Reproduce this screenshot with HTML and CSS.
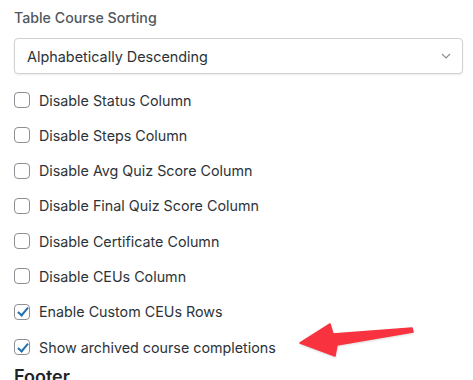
FILE: index.html
```html
<!DOCTYPE html>
<html lang="en">

<head>
    <meta charset="UTF-8">
    <title>Course Table Settings</title>
    <link rel="stylesheet" href="styles.css">
</head>

<body>
    <div class="panel">
        <label class="field-label" for="sorting">Table Course Sorting</label>
        <div class="select-wrap">
            <select id="sorting" class="select">
                <option>Alphabetically Descending</option>
                <option>Alphabetically Ascending</option>
            </select>
            <svg class="chevron" width="10" height="6" viewBox="0 0 10 6">
                <path d="M1 1 L5 5 L9 1" fill="none" stroke="#8c8f94" stroke-width="1.2" />
            </svg>
        </div>

        <div class="options">
            <label class="option"><input type="checkbox"> Disable Status Column</label>
            <label class="option"><input type="checkbox"> Disable Steps Column</label>
            <label class="option"><input type="checkbox"> Disable Avg Quiz Score Column</label>
            <label class="option"><input type="checkbox"> Disable Final Quiz Score Column</label>
            <label class="option"><input type="checkbox"> Disable Certificate Column</label>
            <label class="option"><input type="checkbox"> Disable CEUs Column</label>
            <label class="option"><input type="checkbox" checked> Enable Custom CEUs Rows</label>
            <label class="option"><input type="checkbox" checked> Show archived course completions</label>
        </div>

        <h3 class="section-title">Footer</h3>
    </div>

    <!-- annotation arrow -->
    <svg class="arrow" width="473" height="380" viewBox="0 0 473 380">
        <polygon points="300,343 330,324 333,334 412,328 413,332 337,345 335,356"
            fill="#f8333f" stroke="#f8333f" stroke-width="1.5" stroke-linejoin="round" />
    </svg>
</body>

</html>
```

FILE: styles.css
```css
body {
    font-family: 'Inter', 'Liberation Sans', sans-serif;
    margin: 0;
    padding: 0;
    background: #fff;
    color: #2c3338;
    overflow: hidden;
}

.panel {
    padding: 9px 10px 0 14px;
}

.field-label {
    display: block;
    font-size: 14.2px;
    font-weight: 500;
    color: #50575e;
    line-height: 18px;
    margin-bottom: 11px;
}

.select-wrap {
    position: relative;
    width: 449px;
}

.select {
    appearance: none;
    -webkit-appearance: none;
    width: 100%;
    height: 36px;
    padding: 0 12px;
    border: 1px solid #d0d1d4;
    border-radius: 4px;
    background: #fff;
    box-shadow: 0 1px 2px rgba(0, 0, 0, 0.08);
    font-family: inherit;
    font-size: 14.4px;
    color: #2c3338;
}

.chevron {
    position: absolute;
    right: 12px;
    top: 15px;
}

.options {
    display: flex;
    flex-direction: column;
    gap: 15.3px;
    margin-top: 16px;
}

.option {
    display: flex;
    align-items: center;
    gap: 9px;
    height: 20px;
    font-size: 14.3px;
    color: #2c3338;
}

.option input {
    appearance: none;
    -webkit-appearance: none;
    width: 16px;
    height: 16px;
    margin: 0;
    border: 1px solid #8c8f94;
    border-radius: 4px;
    background: #fff;
    position: relative;
}

.option input:checked::after {
    content: '';
    position: absolute;
    left: 4.5px;
    top: 0.5px;
    width: 4px;
    height: 9px;
    border: solid #2271b1;
    border-width: 0 2.8px 2.8px 0;
    transform: rotate(40deg);
}

.section-title {
    font-size: 18px;
    font-weight: 600;
    margin: 9px 0 0;
    color: #1d2327;
}

.arrow {
    position: absolute;
    top: 0;
    left: 0;
    pointer-events: none;
    filter: drop-shadow(0 1px 1px rgba(0, 0, 0, 0.15));
}
```
